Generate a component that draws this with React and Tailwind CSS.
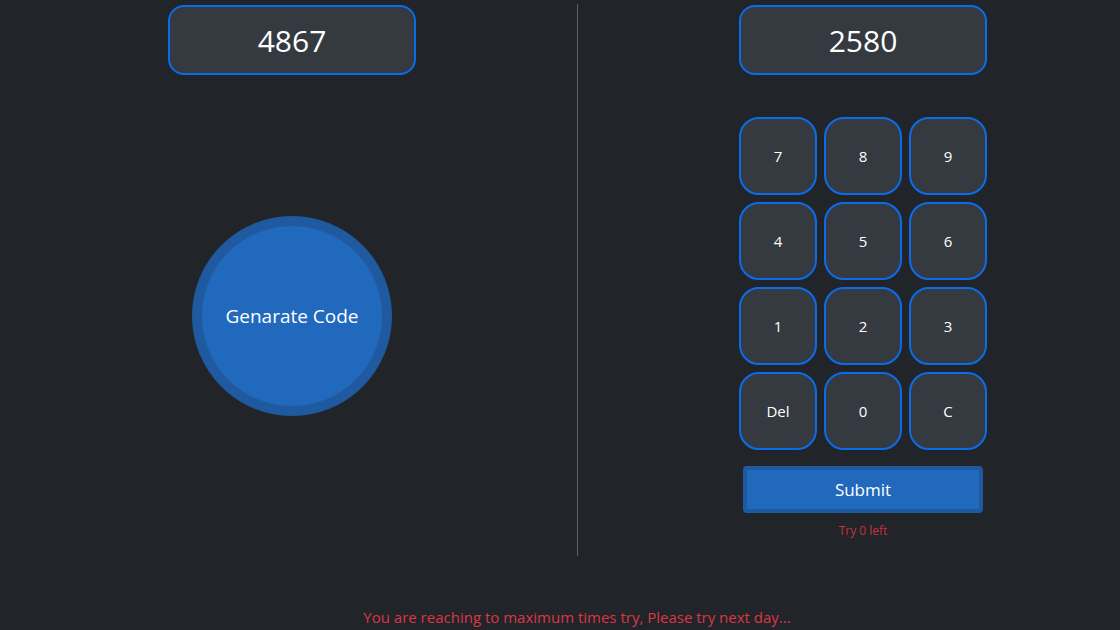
import React, { useState } from "react";

const keys = ["7", "8", "9", "4", "5", "6", "1", "2", "3", "Del", "0", "C"];

function Display({ value }) {
  return (
    <div className="w-[248px] h-[70px] rounded-[16px] border-2 border-[#0b6ceb] bg-[#343a40] flex items-center justify-center text-white text-[30px]">
      {value}
    </div>
  );
}

export default function App() {
  const [code] = useState("4867");
  const [input] = useState("2580");

  return (
    <div
      className="w-[1120px] h-[630px] bg-[#212529] flex flex-col overflow-hidden"
      style={{ fontFamily: '"Open Sans", "Noto Sans", sans-serif' }}
    >
      <div className="flex mt-[4px] h-[552px]">
        {/* left side */}
        <div className="w-[577px] pl-[7px] flex flex-col items-center pt-px">
          <Display value={code} />
          <button className="mt-[141px] w-[200px] h-[200px] rounded-full border-[10px] border-[#1f5aa0] bg-[#2169bd] text-white text-[19px]">
            Genarate Code
          </button>
        </div>

        <div className="w-px bg-[#5c6167]" />

        {/* right side */}
        <div className="flex-1 pl-[28px] flex flex-col items-center pt-px">
          <Display value={input} />
          <div className="mt-[42px] grid grid-cols-[repeat(3,78px)] gap-[7px]">
            {keys.map((k) => (
              <button
                key={k}
                className="h-[78px] rounded-[20px] border-2 border-[#0b6ceb] bg-[#343a40] text-white text-[15px]"
              >
                {k}
              </button>
            ))}
          </div>
          <button className="mt-[16px] w-[240px] h-[47px] rounded-[4px] border-4 border-[#1f5aa0] bg-[#2169bd] text-white text-[17px]">
            Submit
          </button>
          <p className="mt-[9px] text-[12px] text-[#c8323f]">Try 0 left</p>
        </div>
      </div>

      <p className="mt-[50px] pl-[34px] text-center text-[15px] text-[#dc3545]">
        You are reaching to maximum times try, Please try next day...
      </p>
    </div>
  );
}
